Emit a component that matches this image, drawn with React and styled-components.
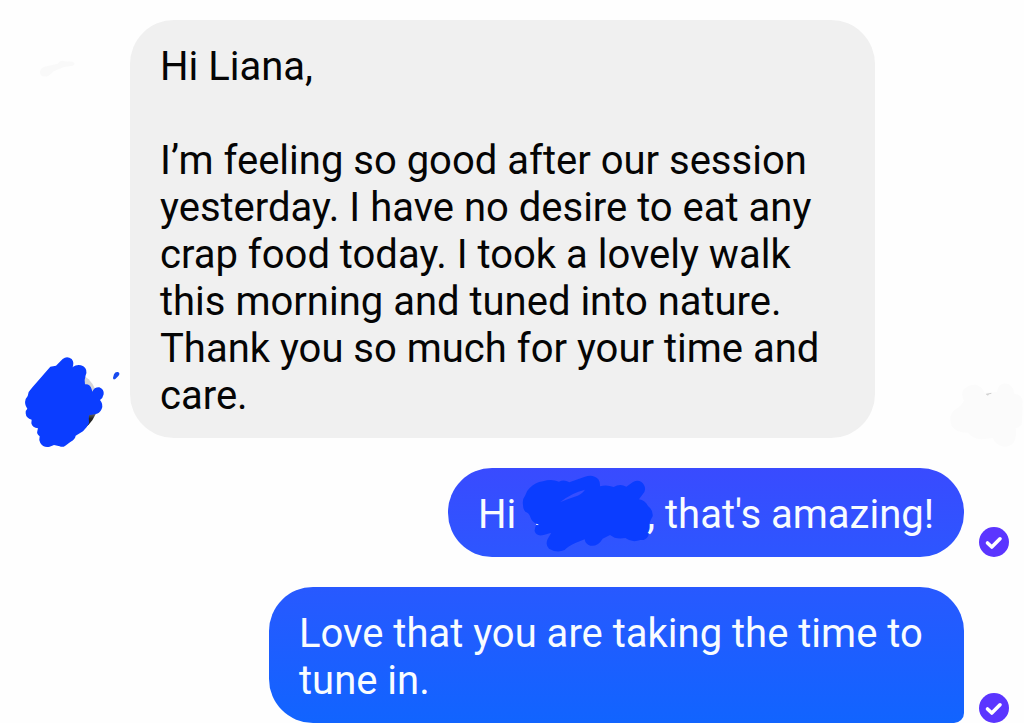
import React from "react";
import styled, { createGlobalStyle } from "styled-components";

const GlobalStyle = createGlobalStyle`
  *, *::before, *::after { box-sizing: border-box; }
  body {
    margin: 0;
    background: #fefefe;
    font-family: Roboto, "Liberation Sans", sans-serif;
    overflow-x: hidden;
  }
`;

const Thread = styled.main`
  display: flex;
  flex-direction: column;
  gap: 30px;
  padding-top: 20px;
`;

const Row = styled.div`
  position: relative;
  display: flex;
  align-items: flex-end;
  justify-content: ${({ $sent }) => ($sent ? "flex-end" : "flex-start")};
  gap: ${({ $sent }) => ($sent ? "15px" : "32px")};
  padding: ${({ $sent }) => ($sent ? "0 15px 0 25px" : "0 149px 0 34px")};
`;

const Bubble = styled.div`
  isolation: isolate;
  max-width: ${({ $sent }) => ($sent ? "695px" : "745px")};
  padding: 23px 30px 19px;
  border-radius: ${({ $tail }) => ($tail ? "44px 44px 10px 44px" : "44px")};
  background: ${({ $fill }) => $fill};
  color: ${({ $sent }) => ($sent ? "#f8fcff" : "#050505")};
  font-size: 40px;
  line-height: 47px;
`;

const Paragraph = styled.p`
  margin: 0;
  & + & { margin-top: 47px; }
`;

const Avatar = styled.div`
  position: relative;
  flex: none;
  width: 64px;
  height: 64px;
  margin-bottom: 4px;
  border-radius: 50%;
  background: linear-gradient(#d4d4d6 0 50%, #909092 64%, #242424 76%);
`;

const AvatarScribble = styled.svg`
  position: absolute;
  left: -24px;
  top: -30px;
  width: 130px;
  height: 120px;
`;

const Smudge = styled.svg`
  position: absolute;
  right: 0;
  bottom: -22px;
  width: 94px;
  height: 90px;
`;

const Streak = styled.svg`
  position: absolute;
  left: 20px;
  top: 20px;
  width: 80px;
  height: 60px;
`;

const HiddenName = styled.span`
  position: relative;
  z-index: -1;
  display: inline-block;
  width: 121px;
  height: 30px;
`;

const NameScribble = styled.svg`
  position: absolute;
  left: -87px;
  top: -38px;
  width: 260px;
  height: 110px;
`;

const Seen = styled.svg`
  flex: none;
  width: 30px;
  height: 30px;
`;

function SeenBadge() {
  return (
    <Seen viewBox="0 0 30 30" role="img" aria-label="Delivered">
      <circle cx="15" cy="15" r="15" fill="#5b35ff" />
      <path d="M8.5 16 L12.8 20 L21 11.8" fill="none" stroke="#fff" strokeWidth="3.6" strokeLinecap="round" strokeLinejoin="round" />
    </Seen>
  );
}

export default function App() {
  return (
    <>
      <GlobalStyle />
      <Thread>
        <Row>
          <Streak viewBox="0 0 240 180" aria-hidden="true">
            <path d="M60 98Q59 84 74 80L113 71Q122 59 132 64L158 65Q170 71 158 77L132 81L101 94L85 108Q64 114 60 98Z" fill="#f9f9f9" />
          </Streak>
          <Avatar>
            <AvatarScribble viewBox="0 0 390 360" aria-hidden="true">
              <path
                d="M121 80L138 77L158 57Q171 47 185 57Q195 69 186 85L188 81Q204 70 220 79Q234 89 227 106L224 120L225 133Q240 131 245 148L247 155Q253 141 268 142Q283 148 281 163Q279 174 270 180Q281 193 275 207Q269 221 254 223L237 226Q236 237 237 249Q231 263 219 274L197 287Q195 299 181 306L166 317Q158 323 149 319L132 315L119 320Q100 324 91 309Q86 299 89 289Q79 282 82 273L84 265Q67 263 64 250L65 239Q48 235 47 220Q46 211 52 206Q42 193 47 177Q55 168 56 156L66 143Z"
                fill="#0b3dff"
              />
              <path d="M309 113L312 103Q316 94 324 96Q332 101 325 108L316 117Q309 121 309 113Z" fill="#174aef" />
            </AvatarScribble>
          </Avatar>
          <Bubble $fill="#f0f0f0">
            <Paragraph>Hi Liana,</Paragraph>
            <Paragraph>
              I’m feeling so good after our session yesterday. I have no desire to eat any crap food
              today. I took a lovely walk this morning and tuned into nature. Thank you so much for
              your time and care.
            </Paragraph>
          </Bubble>
          <Smudge viewBox="0 0 282 270" aria-hidden="true">
            <path
              d="M102 92Q91 72 102 57Q117 43 137 44Q157 49 163 68L201 66Q203 44 224 40Q249 41 253 71Q276 75 278 94L276 158Q275 170 257 175Q262 205 247 222Q228 237 207 225Q191 216 189 204L155 208Q126 205 114 188Q81 190 65 168Q53 139 74 119Q91 111 102 92Z"
              fill="#fbfbfb"
            />
            <path d="M168 73L184 70M171 75L176 74" stroke="#b8b8b8" strokeWidth="2" />
          </Smudge>
        </Row>

        <Row $sent>
          <Bubble $sent $fill="linear-gradient(#394bff, #2d56ff)">
            <Paragraph>
              Hi{" "}
              <HiddenName role="img" aria-label="Hidden name">
                <NameScribble viewBox="0 0 780 330" aria-hidden="true">
                  <path
                    fillRule="evenodd"
                    d="M252 135Q249 119 259 106Q261 94 272 84Q288 67 312 64Q337 55 360 65Q375 57 391 67L438 50Q463 42 478 58Q484 67 483 79Q503 73 524 81Q543 70 562 80L582 66Q603 56 615 75Q624 92 609 106L600 118Q619 121 627 138Q643 150 641 169Q635 178 631 192Q630 211 628 227Q620 242 604 240Q579 249 559 234Q541 237 527 233L513 225L491 236Q477 260 454 257Q439 253 437 238L409 249Q386 260 377 270Q353 280 330 266Q318 254 326 237L337 218L314 225Q292 230 287 214Q286 203 292 195L299 193L292 191Q278 186 273 169Q270 158 259 155Q252 147 252 135ZM363 127Q398 98 438 89Q429 103 405 111Q383 118 363 127Z"
                    fill="#0b3dff"
                  />
                  <path d="M291 193L298 194" stroke="#dce9ff" strokeWidth="3" />
                </NameScribble>
              </HiddenName>
              , that's amazing!
            </Paragraph>
          </Bubble>
          <SeenBadge />
        </Row>

        <Row $sent>
          <Bubble $sent $tail $fill="linear-gradient(#2859ff, #1164ff)">
            <Paragraph>Love that you are taking the time to tune in.</Paragraph>
          </Bubble>
          <SeenBadge />
        </Row>
      </Thread>
    </>
  );
}
